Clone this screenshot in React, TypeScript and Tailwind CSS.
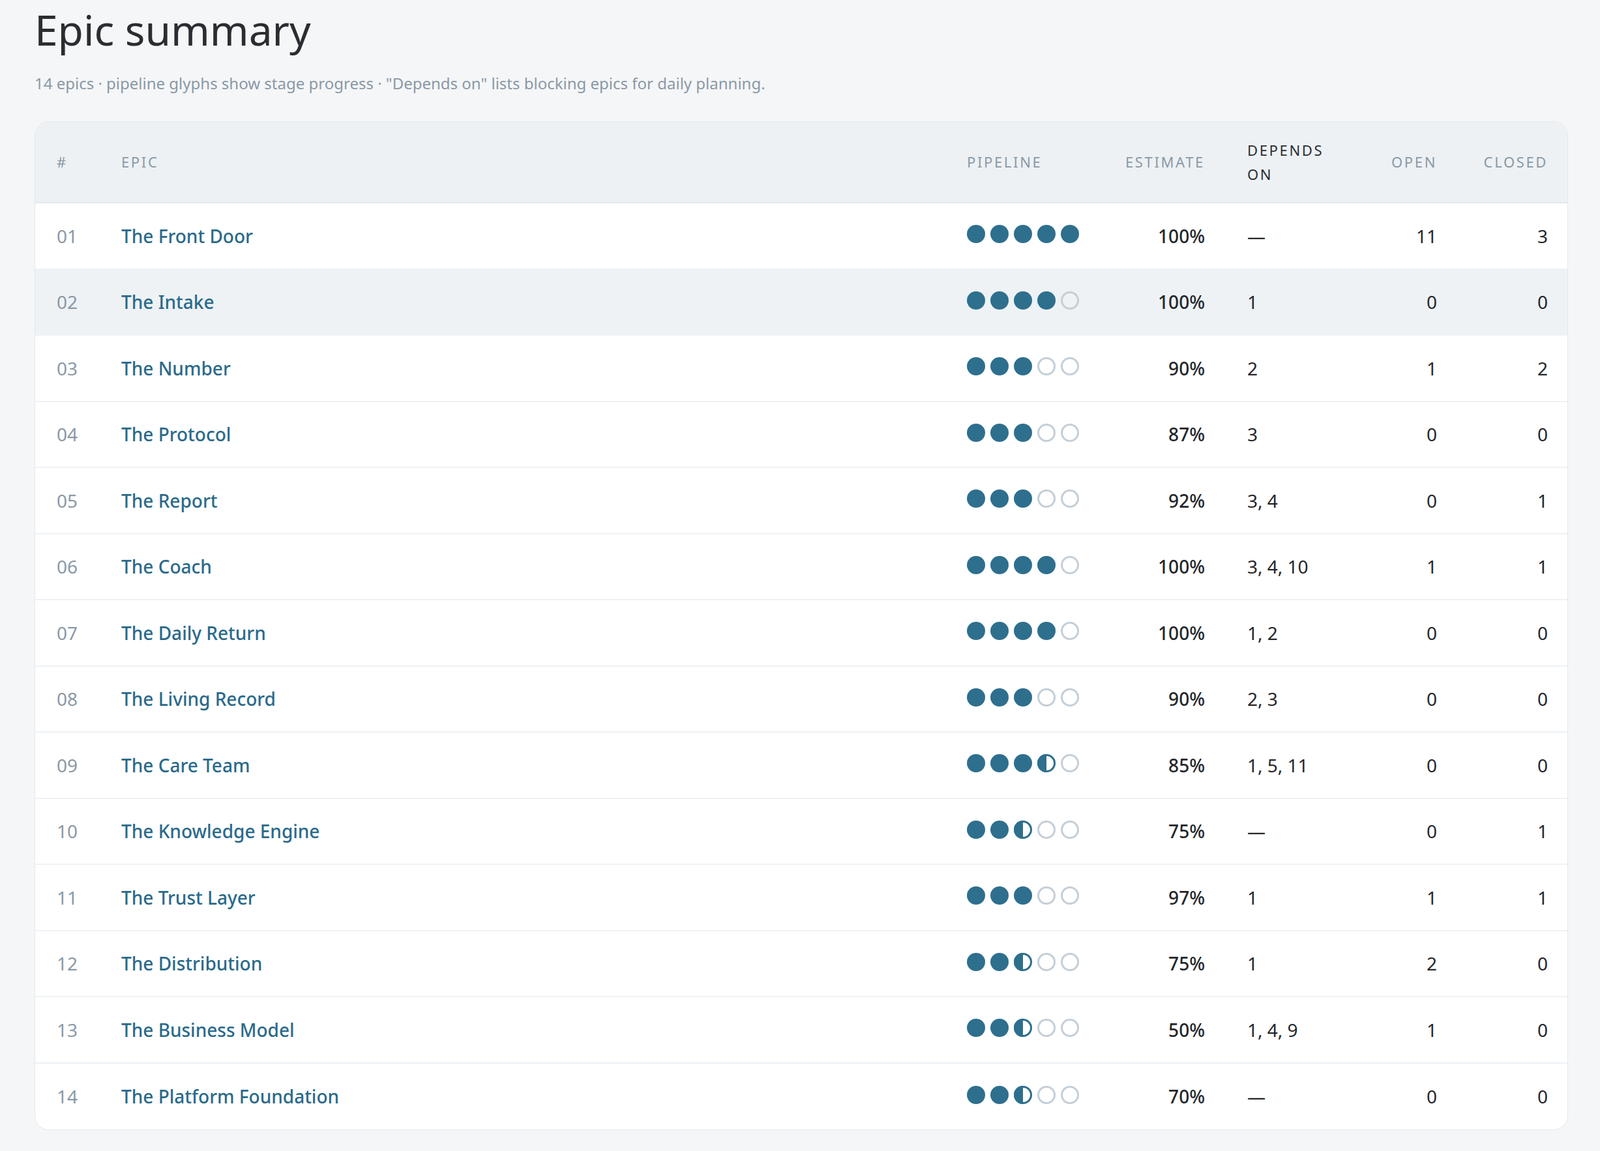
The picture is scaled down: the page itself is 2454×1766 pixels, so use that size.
const rows: [string, string, number[], string, string, number, number][] = [
  ["01", "The Front Door", [2, 2, 2, 2, 2], "100%", "—", 11, 3],
  ["02", "The Intake", [2, 2, 2, 2, 0], "100%", "1", 0, 0],
  ["03", "The Number", [2, 2, 2, 0, 0], "90%", "2", 1, 2],
  ["04", "The Protocol", [2, 2, 2, 0, 0], "87%", "3", 0, 0],
  ["05", "The Report", [2, 2, 2, 0, 0], "92%", "3, 4", 0, 1],
  ["06", "The Coach", [2, 2, 2, 2, 0], "100%", "3, 4, 10", 1, 1],
  ["07", "The Daily Return", [2, 2, 2, 2, 0], "100%", "1, 2", 0, 0],
  ["08", "The Living Record", [2, 2, 2, 0, 0], "90%", "2, 3", 0, 0],
  ["09", "The Care Team", [2, 2, 2, 1, 0], "85%", "1, 5, 11", 0, 0],
  ["10", "The Knowledge Engine", [2, 2, 1, 0, 0], "75%", "—", 0, 1],
  ["11", "The Trust Layer", [2, 2, 2, 0, 0], "97%", "1", 1, 1],
  ["12", "The Distribution", [2, 2, 1, 0, 0], "75%", "1", 2, 0],
  ["13", "The Business Model", [2, 2, 1, 0, 0], "50%", "1, 4, 9", 1, 0],
  ["14", "The Platform Foundation", [2, 2, 1, 0, 0], "70%", "—", 0, 0],
];

const cols = "grid grid-cols-[99px_1297px_200px_165px_265px_91px_170px] pl-[33px] pr-[32px] items-center";

const Dot = ({ s }: { s: number }) => (
  <svg width="28" height="28" viewBox="0 0 28 28">
    {s === 2 && <circle cx="14" cy="14" r="14" fill="#2e6f8e" />}
    {s === 1 && (
      <>
        <circle cx="14" cy="14" r="12.5" fill="none" stroke="#2e6f8e" strokeWidth="3" />
        <path d="M14 0 A14 14 0 0 0 14 28 Z" fill="#2e6f8e" />
      </>
    )}
    {s === 0 && <circle cx="14" cy="14" r="12.5" fill="none" stroke="#c5cfd7" strokeWidth="3" />}
  </svg>
);

export default function App() {
  return (
    <div className="min-h-[1766px] bg-[#f5f6f8] px-[53px] pt-[6px] font-['Inter',sans-serif]">
      <h1 className="font-['Liberation_Serif',serif] text-[64px] leading-[80px] text-[#2a2d31]">Epic summary</h1>
      <p className="mt-[24px] text-[24px] text-[#8a99a5]">
        14 epics · pipeline glyphs show stage progress · "Depends on" lists blocking epics for daily planning.
      </p>
      <div className="mt-[40px] w-[2352px] overflow-hidden rounded-[22px] border border-[#e3e8ec] bg-white">
        <div className={`${cols} h-[125px] bg-[#edf1f4] border-b-2 border-[#e3e8ec] text-[22px] tracking-[0.12em] text-[#8a99a5]`}>
          <div>#</div>
          <div>EPIC</div>
          <div>PIPELINE</div>
          <div className="text-right">ESTIMATE</div>
          <div className="pl-[65px] leading-[37px] text-[#2a2d31]">DEPENDS<br />ON</div>
          <div className="text-right">OPEN</div>
          <div className="text-right">CLOSED</div>
        </div>
        {rows.map(([n, name, dots, est, dep, open, closed], i) => (
          <div
            key={n}
            className={`${cols} h-[101.5px] text-[28px] text-[#24272b] ${i === 1 ? "bg-[#eef2f5]" : ""} ${i < rows.length - 1 ? "border-b-2 border-[#eef2f5]" : ""}`}
          >
            <div className="text-[#8a99a5]">{n}</div>
            <div className="font-medium text-[#2a6a8a]">{name}</div>
            <div className="flex gap-[8px] -mt-[5px]">
              {dots.map((s, j) => <Dot key={j} s={s} />)}
            </div>
            <div className="text-right font-medium">{est}</div>
            <div className="pl-[65px]">{dep}</div>
            <div className="text-right">{open}</div>
            <div className="text-right">{closed}</div>
          </div>
        ))}
      </div>
    </div>
  );
}
